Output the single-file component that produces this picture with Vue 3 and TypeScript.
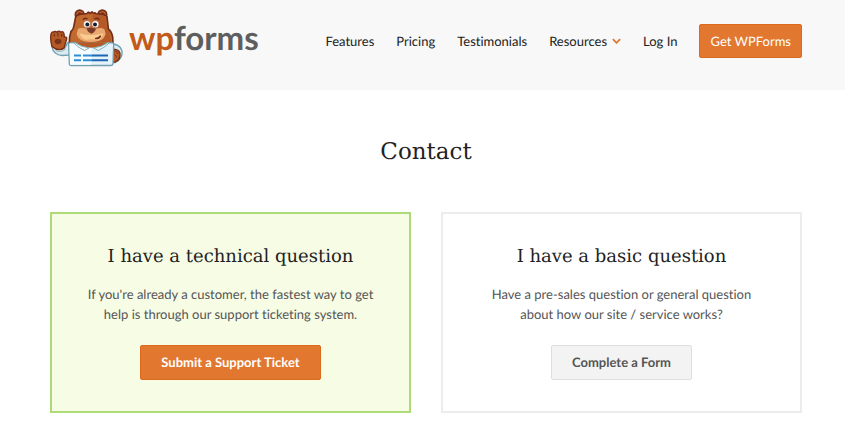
<script setup lang="ts">
interface NavLink {
  label: string
  href: string
  hasMenu?: boolean
}

interface ContactOption {
  title: string
  text: string
  action: string
  href: string
  primary: boolean
}

const links: NavLink[] = [
  { label: 'Features', href: '#features' },
  { label: 'Pricing', href: '#pricing' },
  { label: 'Testimonials', href: '#testimonials' },
  { label: 'Resources', href: '#resources', hasMenu: true },
  { label: 'Log In', href: '#login' },
]

const options: ContactOption[] = [
  {
    title: 'I have a technical question',
    text: "If you're already a customer, the fastest way to get help is through our support ticketing system.",
    action: 'Submit a Support Ticket',
    href: '#support',
    primary: true,
  },
  {
    title: 'I have a basic question',
    text: 'Have a pre-sales question or general question about how our site / service works?',
    action: 'Complete a Form',
    href: '#form',
    primary: false,
  },
]
</script>

<template>
  <div class="page">
    <header class="header">
      <a class="logo" href="#home">
        <svg class="bear" viewBox="30 27 222 177" aria-hidden="true">
          <!-- raised arm and paw -->
          <path d="M36 142 C38 158 52 168 68 168 L92 166 L92 128 L82 131 Q76 147 64 149 Z" fill="#dcebf0" stroke="#6f9fb0" stroke-width="4" />
          <path d="M47 153 Q62 161 78 148" fill="none" stroke="#8fb6c4" stroke-width="3" />
          <path d="M36 141 Q30 120 33 104 Q35 95 41 98 Q44 93 51 98 Q57 92 62 98 Q70 93 72 103 L73 112 Q81 111 80 119 L72 146 Q54 157 36 141 Z" fill="#b55a25" stroke="#752d17" stroke-width="4" />
          <path d="M43 104v6M54 102v7M65 104v6" stroke="#78351e" stroke-width="4" stroke-linecap="round" />
          <ellipse cx="54" cy="126" rx="10" ry="8" fill="#78351e" />
          <!-- other arm -->
          <path d="M207 132 Q240 132 246 154 Q249 177 226 189 L210 190 Z" fill="#dcebf0" stroke="#6f9fb0" stroke-width="4" />
          <path d="M222 149 Q243 151 240 169 Q238 188 217 188 Z" fill="#b55a25" stroke="#752d17" stroke-width="4" />
          <path d="M224 154q9 3 10 10M223 165q6 3 7 10" fill="none" stroke="#813619" stroke-width="3" />
          <!-- ears -->
          <circle cx="119" cy="45" r="13" fill="#bd6029" stroke="#752d17" stroke-width="5" />
          <circle cx="187" cy="45" r="13" fill="#bd6029" stroke="#752d17" stroke-width="5" />
          <circle cx="119" cy="44" r="6" fill="#75351f" />
          <circle cx="187" cy="44" r="6" fill="#75351f" />
          <!-- head -->
          <path d="M107 52 Q113 43 130 43 L141 42 L145 38 L150 42 L156 37 L161 42 L165 40 L169 44 Q194 42 201 52 L205 88 Q215 96 218 112 Q220 126 217 140 L90 140 Q87 126 89 112 L93 96 Q101 89 102 78 Z" fill="#c16a30" stroke="#752d17" stroke-width="5" stroke-linejoin="round" />
          <path d="M158 44 Q190 45 197 54 L201 88 Q214 104 213 137 L158 137 Z" fill="#b55a27" />
          <path d="M114 88 Q124 83 137 87 L170 87 Q184 83 193 89 L197 103 Q193 119 178 124 Q153 131 128 124 Q112 118 110 103 Z" fill="#e9a970" />
          <path d="M119 101 Q151 112 190 101 Q186 119 172 122 Q154 117 137 121 Q121 115 119 101 Z" fill="#fbcb91" />
          <circle cx="141" cy="74" r="11" fill="#fff" stroke="#a9502a" stroke-width="2" />
          <circle cx="166" cy="74" r="11" fill="#fff" stroke="#a9502a" stroke-width="2" />
          <circle cx="142" cy="75" r="6" fill="#111d27" />
          <circle cx="165" cy="75" r="6" fill="#111d27" />
          <path d="M130 60q5-6 11-2M165 58q7-4 12 2" fill="none" stroke="#6d2e18" stroke-width="4" stroke-linecap="round" />
          <path d="M139 88 Q153 82 168 88 Q165 99 154 103 Q143 99 139 88 Z" fill="#783b29" />
          <path d="M167 117 Q178 117 181 110" fill="none" stroke="#71301c" stroke-width="5" stroke-linecap="round" />
          <!-- form panel and collar -->
          <path d="M91 130 L216 130 Q222 130 221 137 L219 193 Q218 198 212 198 L94 198 Q88 198 88 193 L86 137 Q85 130 91 130 Z" fill="#e4f3f9" stroke="#6f9fb0" stroke-width="4" />
          <path d="M89 132 H154 V196 H92 Q90 196 90 192 Z" fill="#f7fcfe" />
          <path d="M108 128 H202 Q184 144 154 145 Q126 144 108 128 Z" fill="#b55a25" />
          <path d="M106 130 Q122 143 148 145 L133 153 Q116 145 102 131 Z" fill="#f7fcfe" stroke="#7fabb9" stroke-width="3" stroke-linejoin="round" />
          <path d="M203 130 Q186 143 160 145 L175 153 Q192 145 207 131 Z" fill="#eaf5f8" stroke="#7fabb9" stroke-width="3" stroke-linejoin="round" />
          <path d="M102 168h21M102 182h21M129 168h25M129 182h25" stroke="#2d8dd6" stroke-width="6" />
          <path d="M154 168h50M154 182h50" stroke="#1c66b3" stroke-width="6" />
        </svg>
        <span class="wordmark"><span class="wp">wp</span>forms</span>
      </a>
      <nav class="nav" aria-label="Main">
        <a v-for="link in links" :key="link.label" class="nav-link" :href="link.href">
          {{ link.label }}
          <svg v-if="link.hasMenu" class="chevron" viewBox="0 0 10 6" aria-hidden="true">
            <path d="M1 1l4 4 4-4" />
          </svg>
        </a>
        <a class="cta" href="#get">Get WPForms</a>
      </nav>
    </header>

    <main class="main">
      <h1 class="title">Contact</h1>
      <div class="cards">
        <section
          v-for="option in options"
          :key="option.title"
          class="card"
          :class="{ featured: option.primary }"
        >
          <h2 class="card-title">{{ option.title }}</h2>
          <p class="card-text">{{ option.text }}</p>
          <a class="button" :class="{ primary: option.primary }" :href="option.href">{{ option.action }}</a>
        </section>
      </div>
    </main>
  </div>
</template>

<style>
body {
  margin: 0;
  background: #fff;
}
</style>

<style scoped>
.page {
  font-family: Lato, "Liberation Sans", sans-serif;
  font-variant-ligatures: none;
  text-rendering: geometricPrecision;
  color: #222;
}

.page a {
  text-decoration: none;
}

.header {
  display: flex;
  align-items: flex-start;
  justify-content: space-between;
  padding: 8px 43px 22px 50px;
  background: #f8f8f8;
}

.logo {
  display: flex;
  align-items: center;
  gap: 5px;
}

.bear {
  display: block;
  width: 74px;
  height: 60px;
}

.wordmark {
  font-size: 33px;
  line-height: 60px;
  font-weight: 700;
  color: #5e5e5e;
}

.wp {
  color: #c25a1a;
}

.nav {
  display: flex;
  align-items: center;
  gap: 22px;
  margin-top: 16px;
  font-size: 13px;
  line-height: 20px;
  white-space: nowrap;
}

.nav-link {
  display: flex;
  align-items: center;
  gap: 5px;
  color: #222;
}

.chevron {
  width: 9px;
  height: 6px;
  fill: none;
  stroke: #e27730;
  stroke-width: 2;
}

.cta {
  padding: 6px 10px;
  border: 1px solid #dc6a1c;
  border-radius: 2px;
  background: #e27730;
  color: #fff;
}

.main {
  padding: 45px 43px 30px 50px;
}

.title,
.card-title {
  margin: 0;
  font-family: "DejaVu Serif", serif;
  font-weight: 400;
  text-align: center;
}

.title {
  font-size: 23px;
  line-height: 34px;
}

.cards {
  display: grid;
  grid-template-columns: repeat(2, minmax(0, 1fr));
  gap: 30px;
  margin-top: 43px;
}

.card {
  display: flex;
  flex-direction: column;
  align-items: center;
  padding: 29px 32px 31px;
  border: 2px solid #ececec;
}

.card.featured {
  border-color: #acdb78;
  background: #f7fce5;
}

.card-title {
  font-size: 18px;
  line-height: 28px;
}

.card-text {
  margin: 13px 0 21px;
  font-size: 13px;
  line-height: 20px;
  text-align: center;
  color: #555;
}

.button {
  padding: 7px 20px;
  border: 1px solid #dedede;
  border-radius: 2px;
  background: #f3f3f3;
  color: #555;
  font-size: 13px;
  line-height: 19px;
  font-weight: 700;
}

.button.primary {
  border-color: #dc6a1c;
  background: #e27730;
  color: #fff;
}
</style>
